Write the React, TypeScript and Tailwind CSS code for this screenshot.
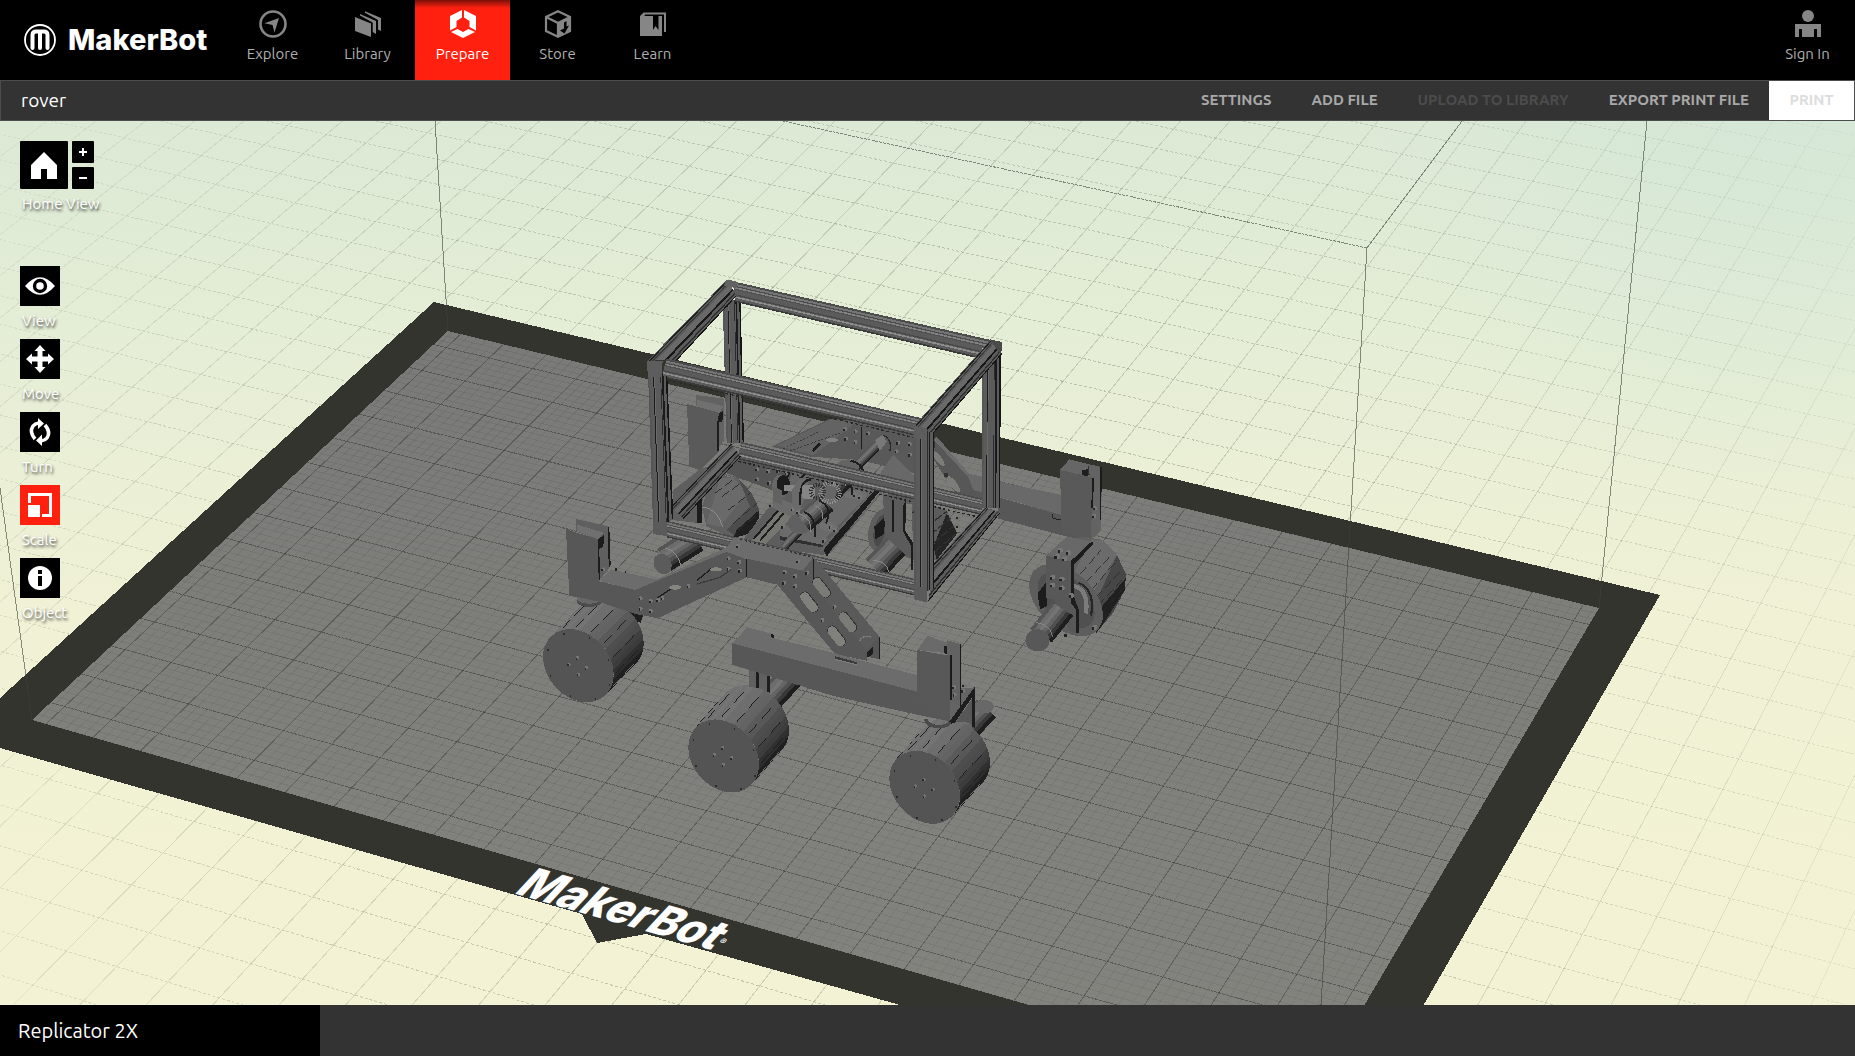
import React from "react";

type Pt = [number, number];

/* ---------- build-plate projection ---------- */

const PLATE: Pt[] = [
  [448, 331],
  [1599, 608],
  [1316, 1087],
  [32, 720],
];
const PLATE_W = 246;
const PLATE_D = 152;

function makeProjection(q: Pt[]) {
  const [[x0, y0], [x1, y1], [x2, y2], [x3, y3]] = q;
  const dx1 = x1 - x2;
  const dx2 = x3 - x2;
  const dx3 = x0 - x1 + x2 - x3;
  const dy1 = y1 - y2;
  const dy2 = y3 - y2;
  const dy3 = y0 - y1 + y2 - y3;
  const det = dx1 * dy2 - dx2 * dy1;
  const g = (dx3 * dy2 - dx2 * dy3) / det;
  const h = (dx1 * dy3 - dx3 * dy1) / det;
  const a = x1 - x0 + g * x1;
  const b = x3 - x0 + h * x3;
  const d = y1 - y0 + g * y1;
  const e = y3 - y0 + h * y3;
  return (mx: number, my: number): Pt => {
    const u = mx / PLATE_W;
    const v = my / PLATE_D;
    const w = g * u + h * v + 1;
    return [(a * u + b * v + x0) / w, (d * u + e * v + y0) / w];
  };
}

const project = makeProjection(PLATE);

function segment(x1: number, y1: number, x2: number, y2: number) {
  const p = project(x1, y1);
  const q = project(x2, y2);
  return `M${p[0].toFixed(1)} ${p[1].toFixed(1)}L${q[0].toFixed(1)} ${q[1].toFixed(1)}`;
}

function gridPaths() {
  let across = "";
  let along = "";
  let minorAcross = "";
  let minorAlong = "";
  for (let y = 6 - 400; y <= 6 + 240; y += 10) across += segment(-260, y, 460, y);
  for (let x = 3 - 270; x <= 3 + 460; x += 10) along += segment(x, -400, x, 250);
  for (let y = 0; y <= PLATE_D; y += 2) minorAcross += segment(0, y, PLATE_W, y);
  for (let x = 1; x <= PLATE_W; x += 2) minorAlong += segment(x, 0, x, PLATE_D);
  return { across, along, minorAcross, minorAlong };
}

const GRID = gridPaths();
const INNER = PLATE.map((p) => p.join(",")).join(" ");

/* ---------- model drawing helpers ---------- */

const P = ({ d, f }: { d: string; f: string }) => <polygon points={d} fill={f} />;

type Stripe = [number, number, string];

const LIT: Stripe[] = [
  [0, 0.1, "#4c4c4c"],
  [0.1, 0.2, "#757575"],
  [0.2, 0.26, "#4c4c4c"],
  [0.26, 0.34, "#808080"],
  [0.34, 0.4, "#505050"],
  [0.62, 0.68, "#484848"],
  [0.72, 0.8, "#8c8c8c"],
  [0.92, 1, "#3a3a3a"],
];
const POST: Stripe[] = [
  [0, 0.1, "#565656"],
  [0.26, 0.31, "#1c1c1c"],
  [0.31, 0.36, "#6a6a6a"],
  [0.63, 0.67, "#2c2c2c"],
  [0.71, 0.8, "#1b1b1b"],
  [0.8, 0.92, "#5c5c5c"],
  [0.92, 1, "#161616"],
];
const SIDE: Stripe[] = [
  [0.04, 0.1, "#1e1e1e"],
  [0.16, 0.22, "#3a3a3a"],
  [0.3, 0.55, "#696969"],
  [0.56, 0.66, "#181818"],
  [0.8, 0.87, "#2e2e2e"],
  [0.94, 1, "#151515"],
];

/* A bar of extruded profile; q lists start edge (a, b) and end edge (d, c). */
function Beam({ q, s, f = "#5b5b5b" }: { q: [Pt, Pt, Pt, Pt]; s: Stripe[]; f?: string }) {
  const [a, b, c, d] = q;
  const mix = (p: Pt, r: Pt, t: number) =>
    `${(p[0] + (r[0] - p[0]) * t).toFixed(1)},${(p[1] + (r[1] - p[1]) * t).toFixed(1)}`;
  return (
    <g>
      <polygon points={[a, b, c, d].map((p) => p.join(",")).join(" ")} fill={f} />
      {s.map(([t0, t1, color], i) => (
        <polygon
          key={i}
          points={[mix(a, b, t0), mix(a, b, t1), mix(d, c, t1), mix(d, c, t0)].join(" ")}
          fill={color}
        />
      ))}
    </g>
  );
}

function Wheel({ cx, cy, dx, dy, bolts = true }: { cx: number; cy: number; dx: number; dy: number; bolts?: boolean }) {
  const A = 120;
  const B = 94;
  const tilt = (49 * Math.PI) / 180;
  const N = 44;
  const at = (t: number): Pt => [
    cx + A * Math.cos(t) * Math.cos(tilt) - B * Math.sin(t) * Math.sin(tilt),
    cy + A * Math.cos(t) * Math.sin(tilt) + B * Math.sin(t) * Math.cos(tilt),
  ];
  const slats: React.ReactNode[] = [];
  for (let i = 0; i < N; i++) {
    const p = at((i / N) * 2 * Math.PI);
    const q = at(((i + 1) / N) * 2 * Math.PI);
    let nx = q[1] - p[1];
    let ny = p[0] - q[0];
    const len = Math.hypot(nx, ny);
    nx /= len;
    ny /= len;
    if (nx * dx + ny * dy <= 0) continue;
    const bright = Math.max(0, Math.min(1, (-ny + 0.55 - 0.25 * nx) / 1.45));
    const v = Math.round(28 + bright * 84 + (i % 2) * 4);
    slats.push(
      <polygon
        key={i}
        points={`${p[0]},${p[1]} ${q[0]},${q[1]} ${q[0] + dx},${q[1] + dy} ${p[0] + dx},${p[1] + dy}`}
        fill={`rgb(${v},${v},${v})`}
      />,
    );
    if (i % 3 === 0) {
      const dark = ny < 0.1;
      slats.push(
        <path
          key={`m${i}`}
          d={`M${p[0] + dx * 0.08} ${p[1] + dy * 0.08}L${p[0] + dx * 0.34} ${p[1] + dy * 0.34}M${p[0] + dx * 0.48} ${p[1] + dy * 0.48}L${p[0] + dx * 0.8} ${p[1] + dy * 0.8}`}
          stroke={dark ? "#1f1f1f" : "#6e6e6e"}
          strokeWidth="3"
        />,
      );
    }
  }
  return (
    <g>
      {slats}
      <ellipse cx={cx} cy={cy} rx={A} ry={B} transform={`rotate(49 ${cx} ${cy})`} fill="#545454" />
      {[0.3, 1.1, 1.9, 2.7, 3.5, 4.3, 5.1, 5.9].map((t) => {
        const p = at(t);
        return (
          <rect key={t} x={cx + (p[0] - cx) * 0.92} y={cy + (p[1] - cy) * 0.92} width="4" height="6" fill="#2b2b2b" />
        );
      })}
      {bolts &&
        [
          [-28, -4],
          [-2, -24],
          [25, 6],
          [0, 26],
        ].map(([x, y]) => (
          <g key={x}>
            <circle cx={cx + x} cy={cy + y} r="5" fill="#747474" />
            <rect x={cx + x - 5} y={cy + y} width="4" height="6" fill="#2a2a2a" />
          </g>
        ))}
    </g>
  );
}

function Screws({ at }: { at: Pt[] }) {
  return (
    <g>
      {at.map(([x, y]) => (
        <g key={`${x}-${y}`}>
          <circle cx={x} cy={y} r="6" fill="#777777" />
          <rect x={x - 6} y={y - 1} width="5" height="7" fill="#222222" />
        </g>
      ))}
    </g>
  );
}

/* Round bar drawn as parallel shaded strokes. */
function Rod({ a, b, w }: { a: Pt; b: Pt; w: number }) {
  const len = Math.hypot(b[0] - a[0], b[1] - a[1]);
  const nx = -(b[1] - a[1]) / len;
  const ny = (b[0] - a[0]) / len;
  const tones = ["#555555", "#6c6c6c", "#747474", "#646464", "#505050", "#383838", "#1e1e1e"];
  return (
    <g>
      {tones.map((c, i) => {
        const o = (i / (tones.length - 1) - 0.5) * w * 0.86;
        return (
          <line
            key={i}
            x1={a[0] + nx * o}
            y1={a[1] + ny * o}
            x2={b[0] + nx * o}
            y2={b[1] + ny * o}
            stroke={c}
            strokeWidth={w / 6}
          />
        );
      })}
    </g>
  );
}

const SLOTS: [number, number, string][] = [
  [868, 306, "#80807c"],
  [905, 262, "#7a7a76"],
  [950, 408, "#80807c"],
  [984, 366, "#7a7a76"],
];

function Rover() {
  return (
    <g shapeRendering="crispEdges">
      {/* rear left assembly */}
      <g transform="translate(520 260) scale(.33333)">
        <P d="528,405 612,416 612,540 597,560 597,458 528,438" f="#626262" />
        <P d="532,420 610,438 598,460 532,440" f="#707070" />
        <P d="501,432 597,458 597,575 540,630 508,620" f="#5a5a5a" />
        <P d="597,460 609,452 607,488 593,484" f="#1d1d1d" />
        <P d="592,484 597,484 597,572 592,572" f="#1d1d1d" />
        <P d="460,690 540,628 620,600 620,640 545,720 545,790 455,780" f="#5e5e5e" />
        <P d="640,590 830,630 830,650 755,690 620,640" f="#545454" />
        <Screws at={[[712, 628], [745, 633], [712, 658], [748, 668], [775, 632], [800, 640]]} />
        <P d="755,560 930,476 1185,500 1185,640 1020,600 870,590" f="#595959" />
        <P d="770,556 935,478 1010,486 880,586" f="#636363" />
        <path d="M790 566L900 514M810 572L960 520" stroke="#3a3a3a" strokeWidth="3" strokeDasharray="6 5" fill="none" />
        <path d="M878 574L900 550" stroke="#1c1c1c" strokeWidth="8" />
        <ellipse cx="936" cy="540" rx="18" ry="6" fill="#80807c" />
        <path d="M1024 500V566" stroke="#1c1c1c" strokeWidth="4" />
        <Screws at={[[975, 508], [1007, 514], [978, 536], [1007, 546], [1045, 520], [1090, 530], [1135, 548], [1170, 552], [1130, 574], [1170, 584]]} />
        <P d="1080,640 1120,584 1185,650 1185,700 1080,676" f="#686868" />
        {/* rear left wheel */}
        <P d="545,742 562,690 610,648 655,655 696,700 718,750 716,775 690,820 640,835 560,800" f="#606060" />
        <P d="600,655 640,652 680,700 600,800 560,790" f="#6a6a6a" />
        <P d="655,655 696,700 718,750 650,830 620,810 690,740" f="#4c4c4c" />
        <P d="718,750 716,775 690,820 640,835 650,810" f="#1f1f1f" />
        <path d="M585 700L645 655M605 710L665 668M625 750L690 700M640 790L710 730M655 810L716 760" stroke="#2c2c2c" strokeWidth="3" strokeDasharray="26 12" />
        <path d="M545 742Q590 740 608 800" stroke="#8a8a8a" strokeWidth="3" fill="none" />
        <P d="530,712 545,712 545,790 530,790" f="#1c1c1c" />
        <Rod a={[432, 900]} b={[530, 838]} w={76} />
        <ellipse cx="428" cy="912" rx="26" ry="32" fill="#5b5b5b" transform="rotate(-25 428 912)" />
        <path d="M436 864Q474 876 482 915" stroke="#8b8b8b" strokeWidth="3" fill="none" />
      </g>

      {/* rear right assembly */}
      <g transform="translate(780 260) scale(.33333)">
        <P d="465,530 610,700 610,745 530,705 462,600" f="#575757" />
        <P d="470,530 610,690 610,700 462,540" f="#6c6c6c" />
        <ellipse cx="475" cy="595" rx="28" ry="9" transform="rotate(52 475 595)" fill="#7c7c78" />
        <ellipse cx="520" cy="672" rx="30" ry="10" transform="rotate(52 520 672)" fill="#7c7c78" />
        <circle cx="499" cy="645" r="7" fill="#333333" />
        <P d="560,640 606,650 660,666 845,705 845,765 660,712 580,690" f="#696969" />
        <P d="655,712 845,765 935,790 932,842 870,832 655,776" f="#575757" />
        <path d="M818 763V775L856 782" stroke="#222222" strokeWidth="3" fill="none" />
        <P d="840,630 868,598 925,612 920,640 940,655 845,640" f="#666666" />
        <P d="925,612 966,622 963,812 932,840 935,700" f="#636363" />
        <P d="840,630 940,653 932,840 845,815" f="#595959" />
        <P d="936,653 942,653 939,745 934,745" f="#1b1b1b" />
        <P d="961,622 966,622 963,780 959,780" f="#1b1b1b" />
        <P d="905,632 925,626 925,650 905,645" f="#1f1f1f" />
        <Screws at={[[945, 745], [943, 768]]} />
      </g>
      <g transform="translate(1000 400) scale(.4464 .3954)">
        <P d="150,350 190,346 225,353 262,392 282,440 279,482 252,540 228,572 170,520 105,450 105,392" f="#606060" />
        <P d="205,352 232,356 262,392 200,500 160,450" f="#6b6b6b" />
        <P d="262,392 282,440 279,482 252,540 215,590 215,510" f="#474747" />
        <P d="282,450 279,482 228,572 215,590 222,530" f="#202020" />
        <path
          d="M180 440L226 380M192 462L246 396M205 480L262 405M215 500L272 430M220 520L278 450M226 540L280 470M229 556L272 500"
          stroke="#2a2a2a"
          strokeWidth="2"
          strokeDasharray="22 9"
        />
        <ellipse cx="148" cy="506" rx="104" ry="66" transform="rotate(52 148 506)" fill="#5d5d5d" />
        <ellipse cx="148" cy="506" rx="82" ry="50" transform="rotate(52 148 506)" fill="#505050" />
        <P d="84,490 104,460 106,520 90,530" f="#1c1c1c" />
        <path d="M165 470Q200 480 192 540" stroke="#7c7c7c" strokeWidth="10" fill="none" />
        <path d="M176 462Q214 480 204 545" stroke="#272727" strokeWidth="5" fill="none" />
        <P d="105,392 150,345 207,358 160,410" f="#686868" />
        <P d="104,394 160,408 158,512 174,535 174,588 160,590 120,505 104,500" f="#585858" />
        <P d="158,408 207,356 208,366 166,416 165,495 178,535 176,590 170,590 170,530 158,512" f="#1d1d1d" />
        <Screws at={[[135, 380], [154, 386], [128, 396], [145, 402], [118, 448], [139, 453], [118, 468], [139, 475], [150, 594], [212, 575], [160, 494]]} />
        <Rod a={[92, 596]} b={[140, 528]} w={58} />
        <path d="M80 562Q115 570 118 600" stroke="#8a8a8a" strokeWidth="2" fill="none" />
        <ellipse cx="84" cy="608" rx="27" ry="28" fill="#585858" />
      </g>

      {/* middle rear wheel and drive mechanism */}
      <g transform="translate(780 260) scale(.33333)">
        <P d="395,720 500,750 532,820 470,900 400,900" f="#5c5c5c" />
        <P d="500,760 532,820 470,900 460,860" f="#242424" />
        <path d="M410 740L395 765M440 800L500 755M450 825L512 775M460 850L520 798M466 872L526 824" stroke="#303030" strokeWidth="4" strokeDasharray="24 8" />
        <Screws at={[[508, 765], [535, 772], [535, 798]]} />
        <ellipse cx="312" cy="812" rx="46" ry="70" transform="rotate(14 312 812)" fill="#5e5e5e" />
        <ellipse cx="312" cy="812" rx="30" ry="54" transform="rotate(14 312 812)" fill="#4a4a4a" />
        <P d="283,800 316,770 312,822 286,838" f="#1c1c1c" />
        <P d="308,700 410,712 410,735 378,730 372,812 404,862 404,900 300,860 316,820" f="#5b5b5b" />
        <P d="337,720 342,720 342,815 337,815" f="#1c1c1c" />
        <P d="370,735 378,722 376,812 400,850 400,930 394,930 394,860 370,815" f="#1c1c1c" />
        <Rod a={[285, 925]} b={[348, 858]} w={76} />
        <path d="M278 902Q318 900 326 935" stroke="#8a8a8a" strokeWidth="3" fill="none" />

        {/* bed rails */}
        <P d="-120,850 70,612 310,672 130,885" f="#5d5d5d" />
        <P d="-90,850 0,745 50,760 -50,860" f="#777772" />
        <P d="10,845 150,700 290,680 120,850" f="#6a6a6a" />
        <P d="130,870 295,668 312,678 140,890" f="#1d1d1d" />
        <path d="M122 872L290 680M150 878L315 685" stroke="#666666" strokeWidth="5" />
        <path d="M-80 838L0 745M-60 842L15 755M-20 700L30 640" stroke="#1d1d1d" strokeWidth="6" />
        <P d="40,625 95,612 120,625 40,700 20,690" f="#666666" />
        <path d="M60 655L118 612" stroke="#1c1c1c" strokeWidth="6" />
        <P d="-40,735 0,715 70,745 30,770" f="#6b6b6b" />
        <P d="0,800 40,790 145,835 130,855 0,828" f="#6b6b6b" />
        <P d="0,828 130,855 130,862 0,840" f="#303030" />
        <P d="120,790 150,785 175,802 160,818 120,806" f="#707070" />
        <P d="195,700 235,690 260,706 245,722 195,712" f="#707070" />
        <P d="240,670 270,655 300,668 280,690" f="#707070" />
        {/* left bearing */}
        <ellipse cx="0" cy="680" rx="24" ry="36" fill="#686868" />
        <ellipse cx="10" cy="675" rx="20" ry="30" fill="#1c1c1c" />
        <P d="-22,680 5,690 5,735 -22,722" f="#626262" />
        <rect x="12" y="674" width="34" height="20" fill="#858585" />
        <P d="36,690 60,655 85,660 80,700 62,745 36,738" f="#6a6a6a" />
        <path d="M92 658Q58 660 60 735" stroke="#1c1c1c" strokeWidth="7" fill="none" />
        <rect x="66" y="676" width="38" height="40" rx="8" fill="#858585" />
        {/* long shaft */}
        <Rod a={[12, 862]} b={[70, 800]} w={24} />
        <ellipse cx="62" cy="790" rx="38" ry="32" fill="#606060" />
        <Rod a={[70, 788]} b={[140, 728]} w={62} />
        <path d="M72 756Q110 770 104 832M118 722Q160 740 138 790" stroke="#1e1e1e" strokeWidth="6" fill="none" />
        <path d="M58 762Q96 772 92 815M104 735Q134 748 126 776" stroke="#858585" strokeWidth="3" fill="none" />
        <Rod a={[152, 700]} b={[215, 630]} w={60} />
        <Rod a={[225, 622]} b={[300, 548]} w={30} />
        <ellipse cx="205" cy="618" rx="34" ry="20" fill="#646464" />
        <path d="M212 602Q258 612 250 662M168 640Q220 655 216 705" stroke="#1e1e1e" strokeWidth="6" fill="none" />
        <path d="M160 640Q200 650 196 680" stroke="#858585" strokeWidth="3" fill="none" />
        <circle cx="150" cy="698" r="28" fill="none" stroke="#8f8f8f" strokeWidth="14" strokeDasharray="3 4" />
        <circle cx="150" cy="698" r="20" fill="#666666" />
        <circle cx="113" cy="695" r="20" fill="none" stroke="#303030" strokeWidth="12" strokeDasharray="4 4" />
        <P d="285,540 308,525 320,545 300,572" f="#787878" />
        <path d="M310 525Q338 540 330 572" stroke="#2a2a2a" strokeWidth="4" fill="none" />
        <Screws at={[[-26, 736], [38, 748], [55, 756], [10, 800], [152, 800], [165, 810], [225, 705], [240, 712], [132, 842], [280, 670]]} />
      </g>

      {/* chassis frame */}
      <g transform="translate(520 260) scale(.33333)">
        <Beam q={[[608, 120], [662, 120], [672, 550], [620, 550]]} s={POST} />
        <Beam q={[[1385, 290], [1443, 285], [1440, 745], [1385, 745]]} s={POST} />
        <Beam q={[[662, 545], [655, 598], [1385, 765], [1385, 715]]} s={LIT} />
        <path d="M655 604L1380 772" stroke="#222222" strokeWidth="4" strokeDasharray="8 7" />
        <Beam q={[[632, 550], [662, 590], [490, 778], [452, 738]]} s={SIDE} />
        <Beam q={[[1395, 742], [1440, 760], [1225, 1025], [1240, 910]]} s={SIDE} />
        <Beam q={[[440, 782], [440, 832], [1190, 1008], [1190, 958]]} s={LIT} />
        <Beam q={[[640, 64], [646, 126], [1362, 292], [1412, 240]]} s={LIT} />
        <Beam q={[[383, 302], [472, 300], [650, 108], [622, 58]]} s={SIDE} />
        <P d="620,58 655,66 646,84 612,76" f="#626262" />
        <Beam q={[[440, 296], [424, 352], [1190, 528], [1202, 474]]} s={LIT} />
        <path d="M445 360L1180 532" stroke="#2a2a2a" strokeWidth="4" strokeDasharray="9 7" />
        <Beam q={[[1185, 495], [1224, 540], [1446, 282], [1412, 238]]} s={SIDE} />
        <P d="1410,238 1446,246 1444,285 1428,266" f="#4a4a4a" />
        <Beam q={[[383, 305], [442, 350], [460, 775], [400, 822]]} s={POST} />
        <P d="380,303 428,303 424,350 384,350" f="#5d5d5d" />
        <P d="398,785 440,785 440,828 398,822" f="#5a5a5a" />
        <Beam q={[[1183, 500], [1243, 520], [1243, 985], [1183, 1010]]} s={POST} />
        <P d="1182,498 1222,505 1222,542 1182,532" f="#5d5d5d" />
        <P d="1182,975 1222,985 1222,1028 1182,1018" f="#5a5a5a" />
      </g>

      {/* front wheels behind arms */}
      <g transform="translate(520 500) scale(.33333)">
        <P d="320,330 370,345 362,368 340,362" f="#1e1e1e" />
        <Wheel cx={175} cy={497} dx={90} dy={-93} />
        <ellipse cx="208" cy="304" rx="38" ry="17" fill="#4c4c4c" />
        <ellipse cx="208" cy="298" rx="36" ry="13" fill="#666666" />
        <Rod a={[750, 598]} b={[812, 530]} w={78} />
        <Wheel cx={611} cy={768} dx={90} dy={-103} />
        <P d="688,480 750,495 750,578 718,566 688,560" f="#606060" />
        <P d="708,510 718,512 718,566 708,564" f="#1d1d1d" />
        <P d="740,520 750,522 750,580 740,574" f="#1d1d1d" />
      </g>
      <g transform="translate(700 600) scale(.33333)">
        <Rod a={[810, 378]} b={[860, 325]} w={76} />
        <ellipse cx="852" cy="320" rx="30" ry="20" fill="#686868" />
        <Wheel cx={674} cy={562} dx={90} dy={-100} />
      </g>

      {/* front rocker */}
      <g transform="translate(520 500) scale(.33333)">
        <P d="168,57 267,80 270,200 240,240 232,120 168,92" f="#5f5f5f" />
        <P d="172,74 250,98 236,118 172,94" f="#707070" />
        <P d="232,120 252,104 250,140 234,148" f="#1c1c1c" />
        <P d="264,80 268,80 272,195 266,205" f="#1c1c1c" />
        <P d="240,243 275,208 410,238 620,142 660,150 345,272" f="#6c6c6c" />
        <P d="138,88 234,118 238,244 345,270 620,155 680,176 680,232 415,354 345,342 240,306 148,285" f="#575757" />
        <P d="234,146 238,146 240,240 236,240" f="#1c1c1c" />
        <path d="M410 295L470 255M530 242L575 205" stroke="#1f1f1f" strokeWidth="4" />
        <path d="M532 252L600 232L634 208" stroke="#3c3c3c" strokeWidth="4" fill="none" />
        <ellipse cx="466" cy="262" rx="18" ry="7" fill="#85857f" />
        <ellipse cx="588" cy="208" rx="18" ry="6" fill="#85857f" />
        <Screws at={[[250, 208], [362, 295], [393, 303], [362, 326], [393, 333], [415, 300], [428, 294], [506, 258], [626, 175], [658, 186], [626, 206], [660, 212], [292, 206], [320, 214]]} />
        <P d="848,212 882,172 1078,410 1078,475 1040,470" f="#5a5a5a" />
        <P d="610,152 645,112 882,170 848,212 680,178" f="#6c6c6c" />
        <path d="M660 118L880 172" stroke="#333333" strokeWidth="4" strokeDasharray="7 7" />
        <P d="680,176 848,212 1042,455 1040,482 945,462 772,254 680,232" f="#575757" />
        <path d="M680 178V232M880 178V240" stroke="#1b1b1b" strokeWidth="4" />
        <Screws at={[[795, 216], [826, 228], [793, 248], [826, 258], [862, 218], [908, 360], [944, 320], [654, 138], [835, 184]]} />
        {SLOTS.map(([x, y, c]) => (
          <g key={`${x}-${y}`} transform={`rotate(52 ${x} ${y})`}>
            <rect x={x - 36} y={y - 15} width="72" height="30" rx="15" fill="#333333" />
            <rect x={x - 34} y={y - 12} width="68" height="27" rx="13" fill={c} />
          </g>
        ))}
        <P d="1038,452 1078,412 1080,476 1070,476 1040,470" f="#555555" />
        <P d="1042,455 1060,440 1060,462 1042,472" f="#1d1d1d" />
        <path d="M1018 424Q1030 402 1054 412" fill="none" stroke="#7a7a7a" strokeWidth="4" />
        <path d="M1079 410V476" stroke="#1b1b1b" strokeWidth="4" />
      </g>

      {/* front beam and right post */}
      <g transform="translate(700 600) scale(.33333)">
        <P d="97,130 142,82 220,102 220,114 405,160 500,186 655,226 655,278" f="#6c6c6c" />
        <P d="213,102 222,104 222,114 213,112" f="#1c1c1c" />
        <P d="97,130 655,276 750,298 750,364 655,345 400,288 97,194" f="#575757" />
        <path d="M404 172L470 190" stroke="#3a3a3a" strokeWidth="7" />
        <path d="M404 178L470 194" stroke="#808080" strokeWidth="3" />
        <P d="750,300 782,265 825,262 780,350 750,366" f="#646464" />
        <P d="750,362 825,260 825,384 816,380 816,292 765,368 740,376" f="#1d1d1d" />
        <P d="768,366 816,296 816,372 790,366" f="#575757" />
        <path d="M677 356Q680 378 715 380Q745 380 750 366" stroke="#4a4a4a" strokeWidth="10" fill="none" />
        <P d="740,120 784,133 781,320 750,300" f="#626262" />
        <P d="652,150 682,107 742,128 742,160" f="#6a6a6a" />
        <P d="732,140 742,136 742,162 732,160" f="#1d1d1d" />
        <P d="651,150 754,168 750,365 652,300" f="#585858" />
        <path d="M753 166V300M782 132V320" stroke="#1b1b1b" strokeWidth="4" />
        <Screws at={[[762, 262], [792, 256], [764, 284], [790, 272]]} />
      </g>
    </g>
  );
}

function Scene() {
  return (
    <svg
      className="absolute inset-0 h-full w-full"
      viewBox="0 121 1855 884"
      preserveAspectRatio="xMidYMid slice"
      role="img"
      aria-label="Rover model on the build plate"
    >
      <defs>
        <linearGradient id="sky" x1="0" y1="0" x2="0" y2="1">
          <stop offset="0" stopColor="#dce9d5" />
          <stop offset="0.28" stopColor="#e6eed6" />
          <stop offset="0.55" stopColor="#f0f1d5" />
          <stop offset="1" stopColor="#f4f2d4" />
        </linearGradient>
        <radialGradient id="haze" gradientUnits="userSpaceOnUse" cx="1780" cy="80" r="420">
          <stop offset="0" stopColor="#d1e6d8" stopOpacity="0.7" />
          <stop offset="1" stopColor="#d1e6d8" stopOpacity="0" />
        </radialGradient>
        <radialGradient id="fade" gradientUnits="userSpaceOnUse" cx="900" cy="700" r="1200">
          <stop offset="0.3" stopColor="#ffffff" />
          <stop offset="0.7" stopColor="#909090" />
          <stop offset="1" stopColor="#000000" />
        </radialGradient>
        <linearGradient id="bed" x1="0" y1="0" x2="0" y2="1">
          <stop offset="0" stopColor="#7a7a78" />
          <stop offset="1" stopColor="#84847f" />
        </linearGradient>
        <mask id="fadeMask" maskUnits="userSpaceOnUse" x="0" y="100" width="1855" height="960">
          <rect x="0" y="100" width="1855" height="960" fill="url(#fade)" />
        </mask>
        <clipPath id="bedClip">
          <polygon points={INNER} />
        </clipPath>
      </defs>
      <rect x="0" y="121" width="1855" height="884" fill="url(#sky)" />
      <rect x="0" y="121" width="1855" height="884" fill="url(#haze)" />
      <g mask="url(#fadeMask)" fill="none" shapeRendering="crispEdges">
        <path d={GRID.across} stroke="#5c6450" strokeOpacity="0.32" strokeDasharray="3 2" />
        <path d={GRID.along} stroke="#5c6450" strokeOpacity="0.26" />
      </g>
      <polygon
        points="434,302 1660,595 1385,1072 1140,1072 646,934 597,943 582,914 0,748 -60,752 0,698"
        fill="#34342e"
        shapeRendering="crispEdges"
      />
      <polygon points={INNER} fill="url(#bed)" shapeRendering="crispEdges" />
      <g clipPath="url(#bedClip)" fill="none" shapeRendering="crispEdges">
        <path d={GRID.minorAcross} stroke="#000000" strokeOpacity="0.06" />
        <path d={GRID.minorAlong} stroke="#000000" strokeOpacity="0.05" />
        <path d={GRID.across} stroke="#2a2a28" strokeOpacity="0.42" strokeDasharray="3 1" />
        <path d={GRID.along} stroke="#2a2a28" strokeOpacity="0.32" />
      </g>
      <g fill="none" stroke="#3c4438" strokeOpacity="0.6" shapeRendering="crispEdges">
        <path d="M435 121L448 331M0 488L32 720M1647 121L1599 608M1367 248L1316 1087M1367 248L1462 121" />
        <path d="M1367 248L783 121" strokeDasharray="3 1" />
      </g>
      <Rover />
      <g transform="translate(513 893) rotate(16) skewX(-27)" fill="#ffffff">
        <text fontFamily="Inter, sans-serif" fontWeight="800" fontSize="43">
          MakerBot
          <tspan fontSize="9" dy="-8">
            ®
          </tspan>
        </text>
      </g>
    </svg>
  );
}

/* ---------- icons ---------- */

const ExploreIcon = () => (
  <svg width="28" height="28" viewBox="0 0 28 28" aria-hidden="true">
    <circle cx="14" cy="14" r="12.5" fill="none" stroke="currentColor" strokeWidth="2.6" />
    <path d="M20 8L15.500 22.500L13.500 15L5.500 13.300Z" fill="currentColor" />
  </svg>
);
const LibraryIcon = () => (
  <svg width="28" height="28" viewBox="0 0 28 28" fill="currentColor" aria-hidden="true">
    <path d="M1 7L17 13.500V27L1 21Z" />
    <path d="M6 5.500V4L22 11V24L18.700 22V12.500Z" />
    <path d="M11 2.800V1.300L27 8V21L24 19.500V10Z" />
  </svg>
);
const PrepareIcon = () => (
  <svg width="28" height="28" viewBox="0 0 28 28" fill="currentColor" aria-hidden="true">
    <path d="M13 0V7.500L7.500 11V17L1 20.500V6Z" />
    <path d="M15 0V7.500L20.500 11V17L27 20.500V6Z" />
    <path d="M2 22L8.500 19L14 22L19.500 19L26 22L14 28Z" />
  </svg>
);
const StoreIcon = () => (
  <svg width="28" height="28" viewBox="0 0 28 28" aria-hidden="true">
    <path d="M14 1.300L26 7V21L14 26.700L2 21V7Z M2 7L14 13L26 7 M14 13V26" fill="none" stroke="currentColor" strokeWidth="2.200" />
    <path d="M14 13L26 7V21L14 26.700Z" fill="currentColor" />
    <path d="M20 12.500L22.500 11V16.500L25 15.500L20.500 23.500L16 20.500L20 18.500Z" fill="#000000" />
  </svg>
);
const LearnIcon = () => (
  <svg width="28" height="28" viewBox="0 0 28 28" aria-hidden="true">
    <path d="M1 6L4.500 2.500H27V22H25V4.500H6L5.500 6H14V20L16.500 16L19.500 20V6H23V26H1Z" fill="currentColor" />
  </svg>
);
const PersonIcon = () => (
  <svg width="28" height="28" viewBox="0 0 28 28" fill="currentColor" aria-hidden="true">
    <circle cx="14" cy="6" r="6" />
    <path d="M1 14H27V27H23V19H20V27H8V19H5V27H1Z" />
  </svg>
);
const HomeIcon = () => (
  <svg width="28" height="28" viewBox="0 0 28 28" fill="#ffffff" aria-hidden="true">
    <path d="M14 1L27 14V28H17V18H11V28H1V14Z" />
  </svg>
);
const ViewIcon = () => (
  <svg width="40" height="40" viewBox="0 0 40 40" aria-hidden="true">
    <path d="M5 20Q20 2.500 35 20Q20 37.500 5 20Z" fill="#ffffff" />
    <circle cx="20" cy="20" r="5.500" fill="none" stroke="#000000" strokeWidth="3.400" />
  </svg>
);
const MoveIcon = () => (
  <svg width="40" height="40" viewBox="0 0 40 40" fill="#ffffff" aria-hidden="true">
    <path d="M20 6L25.500 12H22.500V17.500H28V14.500L34 20L28 25.500V22.500H22.500V28H25.500L20 34L14.500 28H17.500V22.500H12V25.500L6 20L12 14.500V17.500H17.500V12H14.500Z" />
  </svg>
);
const TurnIcon = () => (
  <svg width="40" height="40" viewBox="0 0 40 40" aria-hidden="true">
    <path d="M15 27Q9 20 13 14Q15 11.500 19 11" fill="none" stroke="#ffffff" strokeWidth="3.600" />
    <path d="M25 13Q31 20 27 26Q25 28.500 21 29" fill="none" stroke="#ffffff" strokeWidth="3.600" />
    <path d="M18 6L24 11.500L18 17Z M22 34L16 28.500L22 22.500Z" fill="#ffffff" />
  </svg>
);
const ScaleIcon = () => (
  <svg width="40" height="40" viewBox="0 0 40 40" fill="#ffffff" aria-hidden="true">
    <path d="M8 8H32V32H22V29H29V11H11V18H8Z" />
    <path d="M8 20H20V32H8Z" />
  </svg>
);
const InfoIcon = () => (
  <svg width="40" height="40" viewBox="0 0 40 40" aria-hidden="true">
    <circle cx="20" cy="20" r="12" fill="#ffffff" />
    <path d="M18 12H22V16H18Z M18 18H22V28H18Z" fill="#000000" />
  </svg>
);
const BrandMark = () => (
  <svg width="32" height="32" viewBox="0 0 32 32" fill="none" stroke="#ffffff" aria-hidden="true">
    <circle cx="16" cy="16" r="15" strokeWidth="1.800" />
    <path d="M8.500 24V11Q8.500 7.500 12 7.500H20Q23.500 7.500 23.500 11V24M16 8V24" strokeWidth="4" strokeLinecap="round" />
  </svg>
);

/* ---------- page ---------- */

const NAV = [
  { label: "Explore", Icon: ExploreIcon },
  { label: "Library", Icon: LibraryIcon },
  { label: "Prepare", Icon: PrepareIcon, active: true },
  { label: "Store", Icon: StoreIcon },
  { label: "Learn", Icon: LearnIcon },
];

const TOOLS = [
  { label: "View", Icon: ViewIcon },
  { label: "Move", Icon: MoveIcon },
  { label: "Turn", Icon: TurnIcon },
  { label: "Scale", Icon: ScaleIcon, active: true },
  { label: "Object", Icon: InfoIcon },
];

const TAB = "flex h-20 w-[95px] flex-col items-center pt-[10px] text-[15px] leading-5";
const TOOL_LABEL = "pl-[2px] text-[15px] leading-5 text-white [text-shadow:1px_2px_3px_rgba(0,0,0,0.8)]";

export default function App() {
  return (
    <div className="flex min-h-screen flex-col overflow-hidden bg-black font-['Ubuntu','Noto_Sans',sans-serif]">
      <header className="flex h-20 shrink-0 bg-black">
        <a href="#home" className="flex w-[225px] items-center gap-3 pl-6 text-white" aria-label="MakerBot home">
          <BrandMark />
          <span className="font-['Inter',sans-serif] text-[29px] leading-8 font-extrabold">MakerBot</span>
        </a>
        <nav className="flex" aria-label="Main">
          {NAV.map(({ label, Icon, active }) => (
            <a
              key={label}
              href={`#${label.toLowerCase()}`}
              className={
                active
                  ? `${TAB} bg-[#ff2010] bg-[linear-gradient(#7a0f08,#ff2010_8px)] text-white`
                  : `${TAB} text-[#868686]`
              }
            >
              <Icon />
              <span className={active ? "mt-[6px] text-white" : "mt-[6px] text-[#b0b0b0]"}>{label}</span>
            </a>
          ))}
        </nav>
        <a href="#sign-in" className={`${TAB} ml-auto text-[#868686]`}>
          <PersonIcon />
          <span className="mt-[6px] text-[#b0b0b0]">Sign In</span>
        </a>
      </header>

      <div className="flex h-[41px] shrink-0 items-stretch border border-[#4d4d4d] bg-[#333333] text-[15px] font-bold text-[#a8a8a8]">
        <h1 className="flex items-center pl-5 text-[19px] font-normal text-white">rover</h1>
        <div className="ml-auto flex">
          <button type="button" className="px-5">SETTINGS</button>
          <button type="button" className="px-5">ADD FILE</button>
          <button type="button" disabled className="px-5 text-[#4c4c4c]">UPLOAD TO LIBRARY</button>
          <button type="button" className="px-5">EXPORT PRINT FILE</button>
          <button type="button" disabled className="w-[85px] bg-white text-[#dddddd]">PRINT</button>
        </div>
      </div>

      <main className="relative flex-1 overflow-hidden">
        <Scene />
        <div className="relative flex w-fit flex-col pt-5 pl-5">
          <div className="flex gap-1">
            <button type="button" aria-labelledby="home-view" className="flex size-12 items-center justify-center rounded-[1px] bg-black">
              <HomeIcon />
            </button>
            <div className="flex flex-col gap-1">
              <button type="button" aria-label="Zoom in" className="flex size-[22px] items-center justify-center rounded-[1px] bg-black">
                <svg width="8" height="8" viewBox="0 0 8 8" aria-hidden="true">
                  <path d="M3 0H5V3H8V5H5V8H3V5H0V3H3Z" fill="#ffffff" />
                </svg>
              </button>
              <button type="button" aria-label="Zoom out" className="flex size-[22px] items-center justify-center rounded-[1px] bg-black">
                <svg width="8" height="2" viewBox="0 0 8 2" aria-hidden="true">
                  <path d="M0 0H8V2H0Z" fill="#ffffff" />
                </svg>
              </button>
            </div>
          </div>
          <span id="home-view" className={`${TOOL_LABEL} mt-[5px]`}>Home View</span>
          <div className="mt-[52px] flex flex-col gap-2">
            {TOOLS.map(({ label, Icon, active }) => (
              <button key={label} type="button" aria-pressed={!!active} className="flex flex-col items-start gap-[5px]">
                <span className={active ? "size-10 bg-[#ff2010]" : "size-10 bg-black"}>
                  <Icon />
                </span>
                <span className={TOOL_LABEL}>{label}</span>
              </button>
            ))}
          </div>
        </div>
      </main>

      <footer className="flex h-[51px] shrink-0 bg-[#333333]">
        <button type="button" className="w-80 bg-black pl-[18px] text-left text-xl text-white">
          Replicator 2X
        </button>
      </footer>
    </div>
  );
}
